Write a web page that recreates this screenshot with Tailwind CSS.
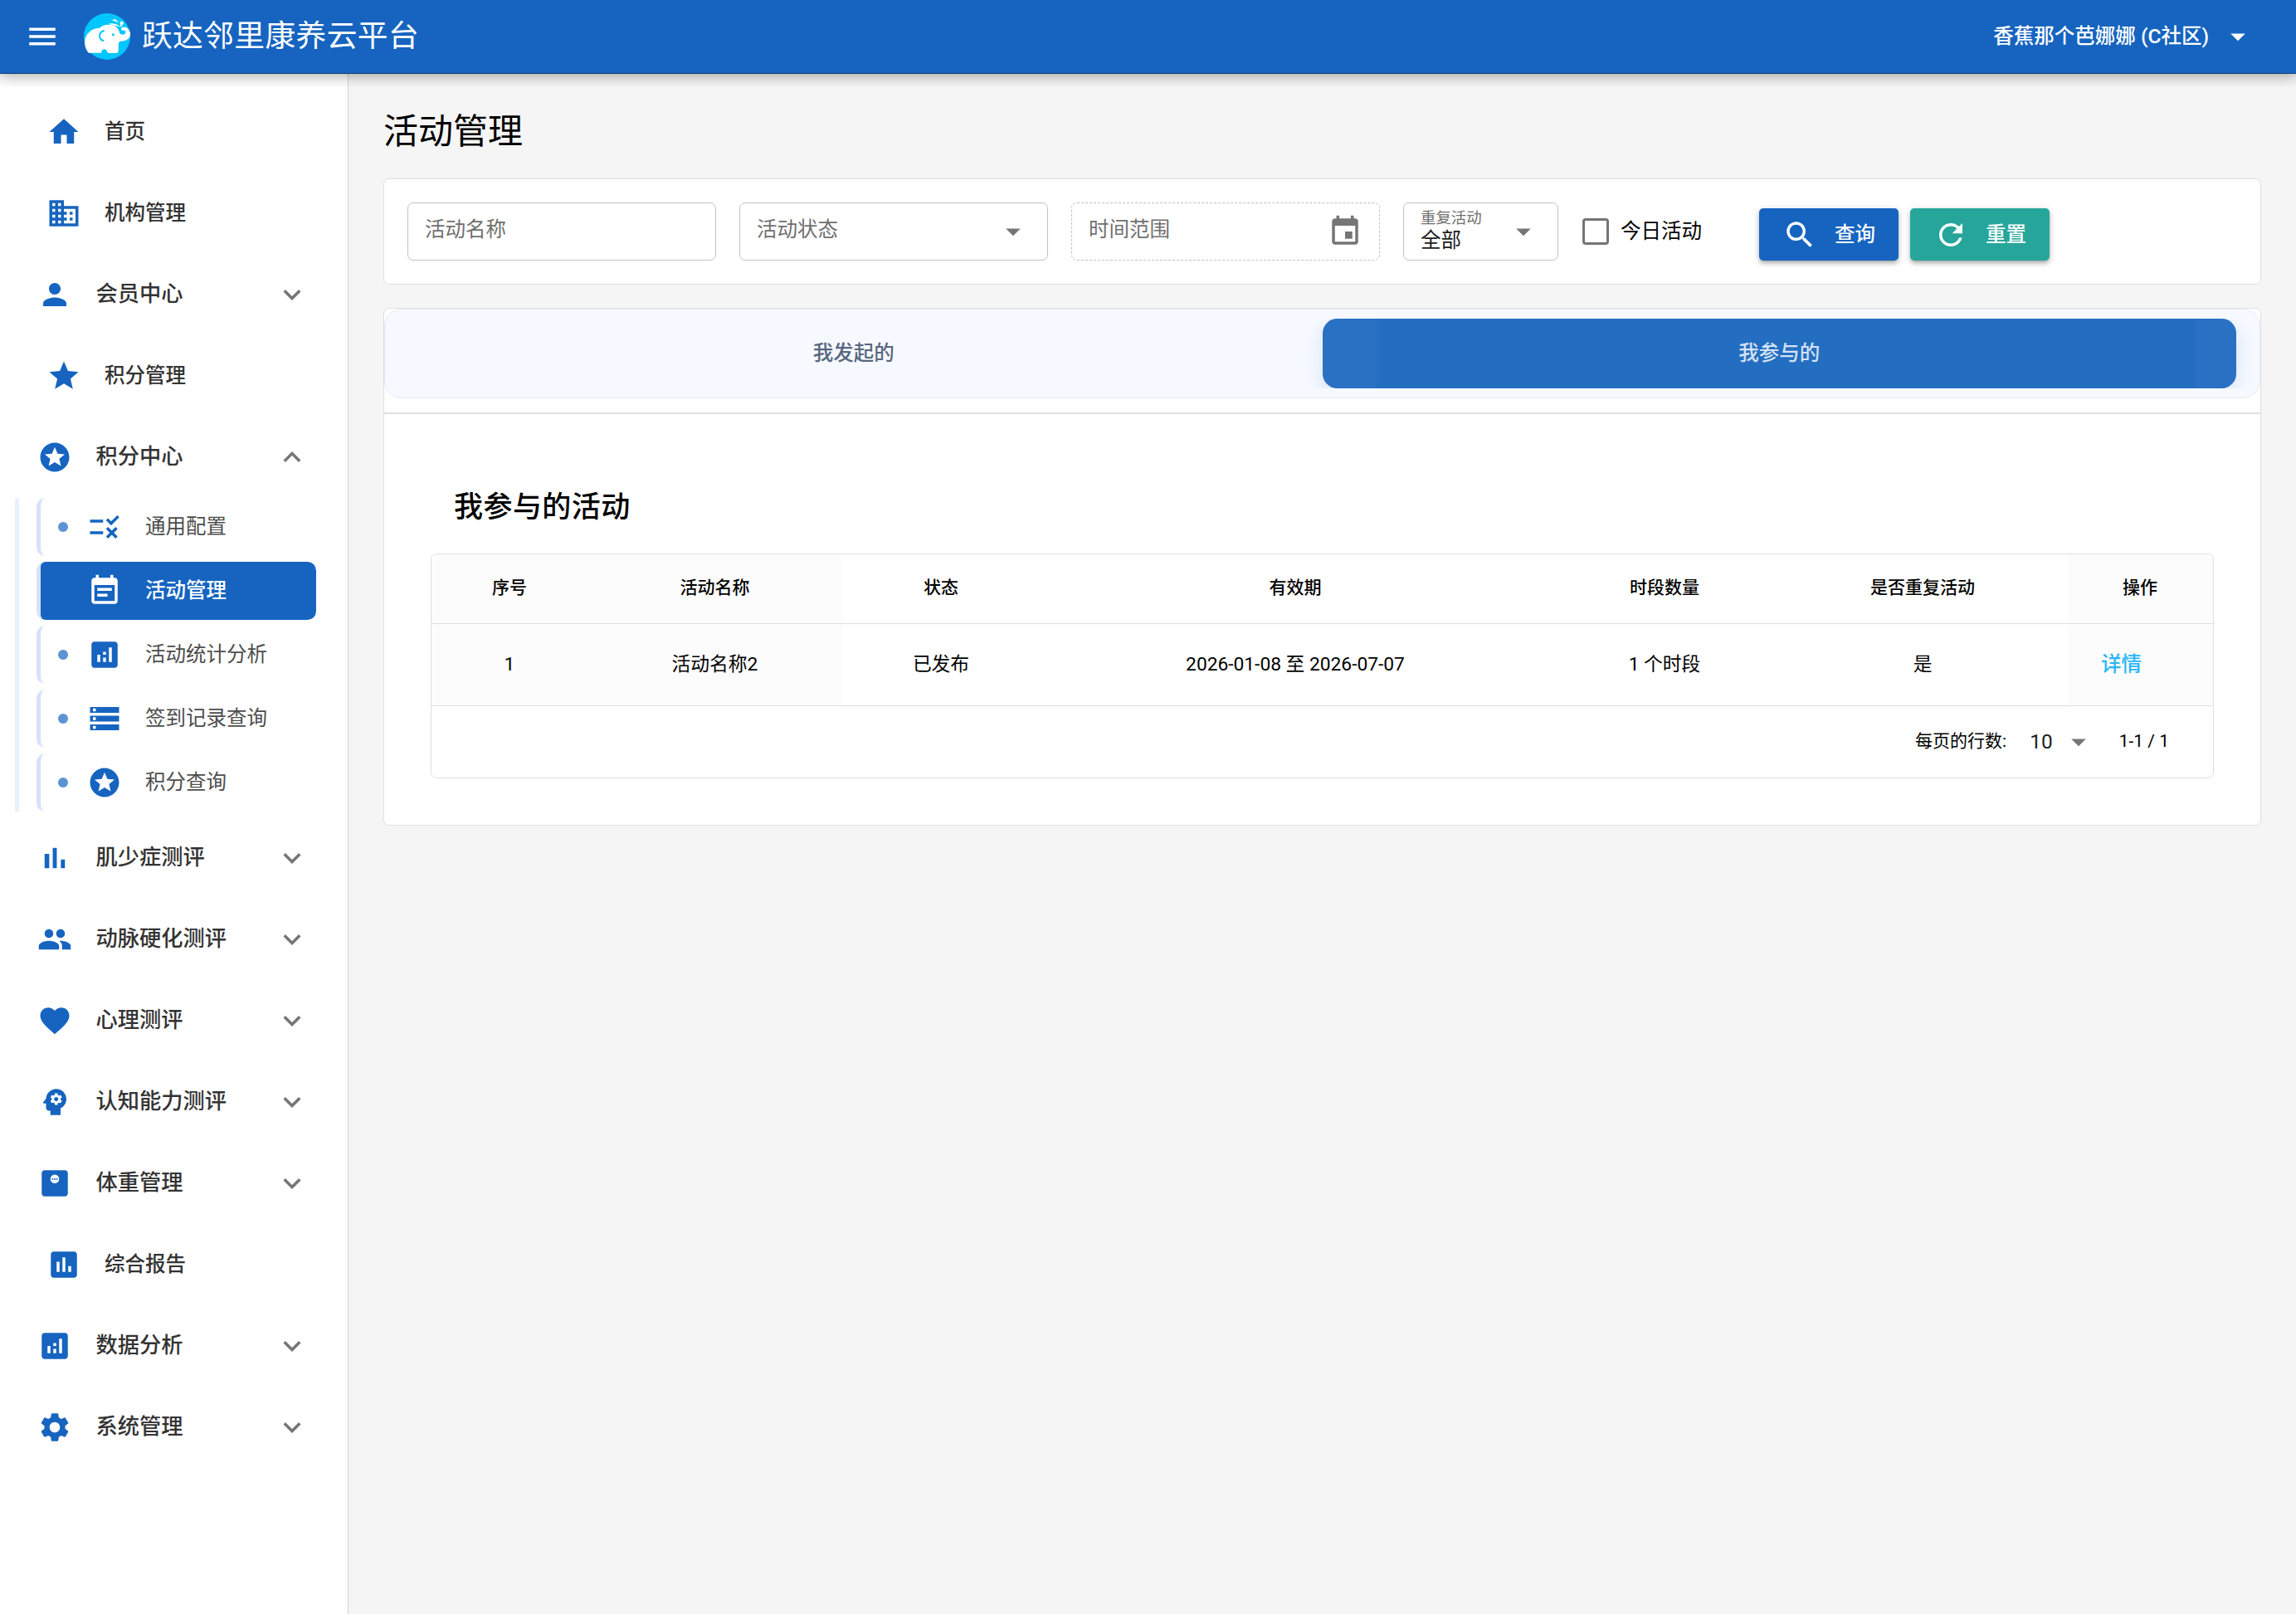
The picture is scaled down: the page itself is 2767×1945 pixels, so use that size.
<!DOCTYPE html>
<html lang="zh-CN">
<head>
  <meta charset="UTF-8">
  <meta name="viewport" content="width=device-width, initial-scale=1.0">
  <title>跃达邻里康养云平台</title>
  <script src="https://cdn.jsdelivr.net/npm/@tailwindcss/browser@4"></script>
</head>
<body class="bg-[#f5f5f5] font-[Roboto,'Noto_Sans_CJK_SC',sans-serif] text-black">

  <!-- 图标 -->
  <svg class="hidden">
    <symbol id="menu" viewBox="0 0 24 24"><path d="M3 18h18v-2H3v2zm0-5h18v-2H3v2zm0-7v2h18V6H3z"/></symbol>
    <symbol id="home" viewBox="0 0 24 24"><path d="M10 20v-6h4v6h5v-8h3L12 3 2 12h3v8z"/></symbol>
    <symbol id="domain" viewBox="0 0 24 24"><path d="M12 7V3H2v18h20V7H12zM6 19H4v-2h2v2zm0-4H4v-2h2v2zm0-4H4V9h2v2zm0-4H4V5h2v2zm4 12H8v-2h2v2zm0-4H8v-2h2v2zm0-4H8V9h2v2zm0-4H8V5h2v2zm10 12h-8v-2h2v-2h-2v-2h2v-2h-2V9h8v10zm-2-8h-2v2h2v-2zm0 4h-2v2h2v-2z"/></symbol>
    <symbol id="person" viewBox="0 0 24 24"><path d="M12 12c2.21 0 4-1.79 4-4s-1.79-4-4-4-4 1.79-4 4 1.79 4 4 4zm0 2c-2.67 0-8 1.34-8 4v2h16v-2c0-2.66-5.33-4-8-4z"/></symbol>
    <symbol id="star" viewBox="0 0 24 24"><path d="M12 17.27L18.18 21l-1.64-7.03L22 9.24l-7.19-.61L12 2 9.19 8.63 2 9.24l5.46 4.73L5.82 21z"/></symbol>
    <symbol id="stars" viewBox="0 0 24 24"><path d="M11.99 2C6.47 2 2 6.48 2 12s4.47 10 9.99 10C17.52 22 22 17.52 22 12S17.52 2 11.99 2zm4.24 16L12 15.45 7.77 18l1.12-4.81-3.73-3.23 4.92-.42L12 5l1.92 4.53 4.92.42-3.73 3.23L16.23 18z"/></symbol>
    <symbol id="rule" viewBox="0 0 24 24"><path d="M16.54 11L13 7.46l1.41-1.41 2.12 2.12 4.24-4.24 1.41 1.41L16.54 11zM11 7H2v2h9V7zm10 6.41L19.59 12 17 14.59 14.41 12 13 13.41 15.59 16 13 18.59 14.41 20 17 17.41 19.59 20 21 18.59 18.41 16 21 13.41zM11 15H2v2h9v-2z"/></symbol>
    <symbol id="event-note" viewBox="0 0 24 24"><path d="M17 10H7v2h10v-2zm2-7h-1V1h-2v2H8V1H6v2H5c-1.11 0-1.99.9-1.99 2L3 19c0 1.1.89 2 2 2h14c1.1 0 2-.9 2-2V5c0-1.1-.9-2-2-2zm0 16H5V8h14v11zm-5-5H7v2h7v-2z"/></symbol>
    <symbol id="event" viewBox="0 0 24 24"><path d="M17 12h-5v5h5v-5zM16 1v2H8V1H6v2H5c-1.11 0-1.99.9-1.99 2L3 19c0 1.1.89 2 2 2h14c1.1 0 2-.9 2-2V5c0-1.1-.9-2-2-2h-1V1h-2zm3 18H5V8h14v11z"/></symbol>
    <symbol id="analytics" viewBox="0 0 24 24"><path d="M19 3H5c-1.1 0-2 .9-2 2v14c0 1.1.9 2 2 2h14c1.1 0 2-.9 2-2V5c0-1.1-.9-2-2-2zM9 17H7v-5h2v5zm4 0h-2v-3h2v3zm0-5h-2v-2h2v2zm4 5h-2V7h2v10z"/></symbol>
    <symbol id="assessment" viewBox="0 0 24 24"><path d="M19 3H5c-1.1 0-2 .9-2 2v14c0 1.1.9 2 2 2h14c1.1 0 2-.9 2-2V5c0-1.1-.9-2-2-2zM9 17H7v-7h2v7zm4 0h-2V7h2v10zm4 0h-2v-4h2v4z"/></symbol>
    <symbol id="storage" viewBox="0 0 24 24"><path d="M2 20h20v-4H2v4zm2-3h2v2H4v-2zM2 4v4h20V4H2zm4 3H4V5h2v2zm-4 7h20v-4H2v4zm2-3h2v2H4v-2z"/></symbol>
    <symbol id="bar-chart" viewBox="0 0 24 24"><path d="M5 9.2h3.2V19H5zM10.6 5h2.8v14h-2.8zm5.6 8H19v6h-2.8z"/></symbol>
    <symbol id="people" viewBox="0 0 24 24"><path d="M16 11c1.66 0 2.99-1.34 2.99-3S17.66 5 16 5c-1.66 0-3 1.34-3 3s1.34 3 3 3zm-8 0c1.66 0 2.99-1.34 2.99-3S9.66 5 8 5C6.34 5 5 6.34 5 8s1.34 3 3 3zm0 2c-2.33 0-7 1.17-7 3.5V19h14v-2.5c0-2.33-4.67-3.5-7-3.5zm8 0c-.29 0-.62.02-.97.05 1.16.84 1.97 1.97 1.97 3.45V19h6v-2.5c0-2.33-4.67-3.5-7-3.5z"/></symbol>
    <symbol id="favorite" viewBox="0 0 24 24"><path d="M12 21.35l-1.45-1.32C5.4 15.36 2 12.28 2 8.5 2 5.42 4.42 3 7.5 3c1.74 0 3.41.81 4.5 2.09C13.09 3.81 14.76 3 16.5 3 19.58 3 22 5.42 22 8.5c0 3.78-3.4 6.86-8.55 11.54L12 21.35z"/></symbol>
    <symbol id="psychology" viewBox="0 0 24 24"><path d="M13 8.57c-.79 0-1.43.64-1.43 1.43s.64 1.43 1.43 1.43 1.43-.64 1.43-1.43-.64-1.43-1.43-1.43z"/><path d="M13 3C9.25 3 6.2 5.94 6.02 9.64L4.1 12.2c-.25.33-.01.8.4.8H6v3c0 1.1.9 2 2 2h1v3h7v-4.68c2.36-1.12 4-3.53 4-6.32 0-3.87-3.13-7-7-7zm3 7c0 .13-.01.26-.02.39l.83.66c.08.06.1.16.05.25l-.8 1.39c-.05.09-.16.12-.24.09l-.99-.4c-.21.16-.43.29-.67.39L14 13.83c-.01.1-.1.17-.2.17h-1.6c-.1 0-.18-.07-.2-.17l-.15-1.06c-.25-.1-.47-.23-.68-.39l-.99.4c-.09.03-.2 0-.25-.09l-.8-1.39c-.05-.08-.03-.19.05-.25l.84-.66c-.01-.13-.02-.26-.02-.39s.02-.27.04-.39l-.85-.66c-.08-.06-.1-.16-.05-.26l.8-1.38c.05-.09.15-.12.24-.09l1 .4c.2-.15.43-.29.67-.39l.15-1.06C12.02 6.07 12.1 6 12.2 6h1.6c.1 0 .18.07.2.17l.15 1.06c.24.1.46.23.67.39l1-.4c.09-.03.2 0 .24.09l.8 1.38c.05.09.03.2-.05.26l-.85.66c.03.12.04.25.04.39z"/></symbol>
    <symbol id="weight" viewBox="0 0 24 24"><path fill-rule="evenodd" d="M19 3H5c-1.1 0-2 .9-2 2v14c0 1.1.9 2 2 2h14c1.1 0 2-.9 2-2V5c0-1.1-.9-2-2-2zm-7 9a3 3 0 1 1 0-6 3 3 0 0 1 0 6z"/><path d="M10 8.5h1v1h-1zM11.5 8.5h1v1h-1zM13 8.5h1v1h-1z"/></symbol>
    <symbol id="settings" viewBox="0 0 24 24"><path d="M19.14 12.94c.04-.3.06-.61.06-.94 0-.32-.02-.64-.07-.94l2.03-1.58c.18-.14.23-.41.12-.61l-1.92-3.32c-.12-.22-.37-.29-.59-.22l-2.39.96c-.5-.38-1.03-.7-1.62-.94l-.36-2.54c-.04-.24-.24-.41-.48-.41h-3.84c-.24 0-.43.17-.47.41l-.36 2.54c-.59.24-1.13.57-1.62.94l-2.39-.96c-.22-.08-.47 0-.59.22L2.74 8.87c-.12.21-.08.47.12.61l2.03 1.58c-.05.3-.09.63-.09.94s.02.64.07.94l-2.03 1.58c-.18.14-.23.41-.12.61l1.92 3.32c.12.22.37.29.59.22l2.39-.96c.5.38 1.03.7 1.62.94l.36 2.54c.05.24.24.41.48.41h3.84c.24 0 .44-.17.47-.41l.36-2.54c.59-.24 1.13-.56 1.62-.94l2.39.96c.22.08.47 0 .59-.22l1.92-3.32c.12-.22.07-.47-.12-.61l-2.01-1.58zM12 15.6c-1.98 0-3.6-1.62-3.6-3.6s1.62-3.6 3.6-3.6 3.6 1.62 3.6 3.6-1.62 3.6-3.6 3.6z"/></symbol>
    <symbol id="search" viewBox="0 0 24 24"><path d="M15.5 14h-.79l-.28-.27C15.41 12.59 16 11.11 16 9.5 16 5.91 13.09 3 9.5 3S3 5.91 3 9.5 5.91 16 9.5 16c1.61 0 3.09-.59 4.23-1.57l.27.28v.79l5 4.99L20.49 19l-4.99-5zm-6 0C7.01 14 5 11.99 5 9.5S7.01 5 9.5 5 14 7.01 14 9.5 11.99 14 9.5 14z"/></symbol>
    <symbol id="refresh" viewBox="0 0 24 24"><path d="M17.65 6.35C16.2 4.9 14.21 4 12 4c-4.42 0-7.99 3.58-7.99 8s3.57 8 7.99 8c3.73 0 6.84-2.55 7.73-6h-2.08c-.82 2.33-3.04 4-5.65 4-3.31 0-6-2.69-6-6s2.69-6 6-6c1.66 0 3.14.69 4.22 1.78L13 11h7V4l-2.35 2.35z"/></symbol>
    <symbol id="down" viewBox="0 0 24 24"><path d="M7.41 8.59L12 13.17l4.59-4.58L18 10l-6 6-6-6z"/></symbol>
    <symbol id="up" viewBox="0 0 24 24"><path d="M7.41 15.41L12 10.83l4.59 4.58L18 14l-6-6-6 6z"/></symbol>
    <symbol id="drop" viewBox="0 0 24 24"><path d="M7 10l5 5 5-5z"/></symbol>
  </svg>

  <div class="flex h-[1945px] w-[2767px] flex-col overflow-hidden">

    <!-- 顶部栏 -->
    <header class="relative z-10 flex h-[89px] shrink-0 items-center border-b border-[#114d96] bg-[#1664c0] text-white">
      <svg class="ml-[30px] size-[42px] fill-current"><use href="#menu"/></svg>
      <svg class="ml-[29px] size-14" viewBox="33 24 168 168">
        <circle cx="117" cy="108" r="84" fill="#00c6ff"/>
        <path fill="#fff" d="M36 128C38 100 58 78 90 77C102 64 128 62 144 70C156 76 160 86 163 96C168 104 184 102 184 92C184 86 178 84 172 86C166 84 167 76 174 75C186 72 198 80 201 96C203 114 188 126 165 125C160 128 158 132 158 138V160C158 165 155 168 150 168H124C119 168 117 165 116 160C114 152 100 152 98 160L96 167H50C42 156 36 144 36 128z"/>
        <path d="M105 88C86 92 86 118 103 123" fill="none" stroke="#00c6ff" stroke-width="6" stroke-linecap="round"/>
        <circle cx="139" cy="101" r="4.5" fill="#00c6ff"/>
        <g fill="#fff">
          <path d="M136 50C142 42 154 46 158 60C152 54 144 51 136 50zM123 62C136 58 154 62 166 73C152 69 138 69 123 62z"/>
          <circle cx="170" cy="60" r="6.5"/>
          <path d="M164 72L168 62L172 72z"/>
        </g>
      </svg>
      <h1 class="ml-[14px] text-[36.75px] leading-none tracking-[.01em]">跃达邻里康养云平台</h1>
      <div class="ml-auto mr-[49px] flex items-center">
        <span class="text-[24.5px] font-medium">香蕉那个芭娜娜 (C社区)</span>
        <svg class="ml-[14px] size-[42px] fill-current"><use href="#drop"/></svg>
      </div>
      <div class="absolute inset-x-0 top-[88px] h-[17px] overflow-hidden">
        <div class="absolute inset-x-0 -top-[88px] h-[88px] shadow-[0_0_17.5px_3.5px_rgba(0,0,0,.2),0_0_17.5px_rgba(0,0,0,.24)]"></div>
      </div>
    </header>

    <div class="flex grow">

      <!-- 侧边菜单 -->
      <aside class="w-[420px] shrink-0 border-r border-[#d2d2d2] bg-white pt-[21px] text-[26.25px] font-medium text-[#333]">
        <a class="flex h-[98px] items-center pl-14 text-[24.5px]">
          <svg class="mr-7 size-[42px] fill-[#1664c0]"><use href="#home"/></svg>首页
        </a>
        <a class="flex h-[98px] items-center pl-14 text-[24.5px]">
          <svg class="mr-7 size-[42px] fill-[#1664c0]"><use href="#domain"/></svg>机构管理
        </a>
        <a class="flex h-[98px] items-center pl-[45px]">
          <svg class="mr-[28.5px] size-[42px] fill-[#1664c0]"><use href="#person"/></svg>会员中心
          <svg class="ml-auto mr-[46px] size-[42px] fill-[#757575]"><use href="#down"/></svg>
        </a>
        <a class="flex h-[98px] items-center pl-14 text-[24.5px]">
          <svg class="mr-7 size-[42px] fill-[#1664c0]"><use href="#star"/></svg>积分管理
        </a>
        <a class="flex h-[98px] items-center pl-[45px]">
          <svg class="mr-[28.5px] size-[42px] fill-[#1664c0]"><use href="#stars"/></svg>积分中心
          <svg class="ml-auto mr-[46px] size-[42px] fill-[#757575]"><use href="#up"/></svg>
        </a>

        <!-- 积分中心子菜单 -->
        <div class="mb-[7px] ml-[18px] mr-[38px] flex flex-col gap-[7px] border-l-5 border-[#e8effd] pl-[21px] text-[24.5px] font-normal text-[#4d4d4d]">
          <a class="flex h-[70px] items-center rounded-[10.5px] border-l-5 border-[#d7e2f8] pl-[21px]">
            <i class="size-3 rounded-full bg-[#5c93d3]"></i>
            <svg class="ml-[23px] mr-7 size-[42px] fill-[#1664c0]"><use href="#rule"/></svg>通用配置
          </a>
          <a class="flex h-[70px] rounded-[10.5px] border-l-5 border-[#d7e2f8] font-medium text-white">
            <span class="flex grow items-center rounded-l-[6px] rounded-r-[10.5px] bg-[#1664c0] pl-14">
              <svg class="mr-7 size-[42px] fill-current"><use href="#event-note"/></svg>活动管理
            </span>
          </a>
          <a class="flex h-[70px] items-center rounded-[10.5px] border-l-5 border-[#d7e2f8] pl-[21px]">
            <i class="size-3 rounded-full bg-[#5c93d3]"></i>
            <svg class="ml-[23px] mr-7 size-[42px] fill-[#1664c0]"><use href="#analytics"/></svg>活动统计分析
          </a>
          <a class="flex h-[70px] items-center rounded-[10.5px] border-l-5 border-[#d7e2f8] pl-[21px]">
            <i class="size-3 rounded-full bg-[#5c93d3]"></i>
            <svg class="ml-[23px] mr-7 size-[42px] fill-[#1664c0]"><use href="#storage"/></svg>签到记录查询
          </a>
          <a class="flex h-[70px] items-center rounded-[10.5px] border-l-5 border-[#d7e2f8] pl-[21px]">
            <i class="size-3 rounded-full bg-[#5c93d3]"></i>
            <svg class="ml-[23px] mr-7 size-[42px] fill-[#1664c0]"><use href="#stars"/></svg>积分查询
          </a>
        </div>

        <a class="flex h-[98px] items-center pl-[45px]">
          <svg class="mr-[28.5px] size-[42px] fill-[#1664c0]"><use href="#bar-chart"/></svg>肌少症测评
          <svg class="ml-auto mr-[46px] size-[42px] fill-[#757575]"><use href="#down"/></svg>
        </a>
        <a class="flex h-[98px] items-center pl-[45px]">
          <svg class="mr-[28.5px] size-[42px] fill-[#1664c0]"><use href="#people"/></svg>动脉硬化测评
          <svg class="ml-auto mr-[46px] size-[42px] fill-[#757575]"><use href="#down"/></svg>
        </a>
        <a class="flex h-[98px] items-center pl-[45px]">
          <svg class="mr-[28.5px] size-[42px] fill-[#1664c0]"><use href="#favorite"/></svg>心理测评
          <svg class="ml-auto mr-[46px] size-[42px] fill-[#757575]"><use href="#down"/></svg>
        </a>
        <a class="flex h-[98px] items-center pl-[45px]">
          <svg class="mr-[28.5px] size-[42px] fill-[#1664c0]"><use href="#psychology"/></svg>认知能力测评
          <svg class="ml-auto mr-[46px] size-[42px] fill-[#757575]"><use href="#down"/></svg>
        </a>
        <a class="flex h-[98px] items-center pl-[45px]">
          <svg class="mr-[28.5px] size-[42px] fill-[#1664c0]"><use href="#weight"/></svg>体重管理
          <svg class="ml-auto mr-[46px] size-[42px] fill-[#757575]"><use href="#down"/></svg>
        </a>
        <a class="flex h-[98px] items-center pl-14 text-[24.5px]">
          <svg class="mr-7 size-[42px] fill-[#1664c0]"><use href="#assessment"/></svg>综合报告
        </a>
        <a class="flex h-[98px] items-center pl-[45px]">
          <svg class="mr-[28.5px] size-[42px] fill-[#1664c0]"><use href="#analytics"/></svg>数据分析
          <svg class="ml-auto mr-[46px] size-[42px] fill-[#757575]"><use href="#down"/></svg>
        </a>
        <a class="flex h-[98px] items-center pl-[45px]">
          <svg class="mr-[28.5px] size-[42px] fill-[#1664c0]"><use href="#settings"/></svg>系统管理
          <svg class="ml-auto mr-[46px] size-[42px] fill-[#757575]"><use href="#down"/></svg>
        </a>
      </aside>

      <main class="grow pl-[42px] pr-[42px] text-[24.5px]">
        <h2 class="flex h-[126px] items-center pt-[14px] text-[42px] leading-none">活动管理</h2>

        <!-- 查询条件 -->
        <section class="flex h-[128px] items-start rounded-[7px] border border-[#dfdfdf] bg-white pl-7 pt-7">
          <div class="flex h-[70px] w-[372px] items-center rounded-[7px] border border-[#c2c2c2] pb-1 pl-5 text-[#6f6f6f]">活动名称</div>
          <div class="ml-7 flex h-[70px] w-[372px] items-center justify-between rounded-[7px] border border-[#c2c2c2] pl-5 pr-5 text-[#6f6f6f]">
            <span class="pb-1">活动状态</span>
            <svg class="size-[42px] fill-[#757575]"><use href="#drop"/></svg>
          </div>
          <div class="ml-7 flex h-[70px] w-[372px] items-center justify-between rounded-[7px] border border-dashed border-[#c2c2c2] pl-5 pr-5 text-[#6f6f6f]">
            <span class="pb-1">时间范围</span>
            <svg class="size-[42px] fill-[#757575]"><use href="#event"/></svg>
          </div>
          <div class="ml-7 flex h-[70px] w-[187px] items-center justify-between rounded-[7px] border border-[#c2c2c2] pl-5 pr-5">
            <div class="flex flex-col pb-[3px]">
              <span class="text-[18.4px] leading-[24px] text-[#6f6f6f]">重复活动</span>
              <span class="leading-[29px] text-[#1d1d1d]">全部</span>
            </div>
            <svg class="size-[42px] fill-[#757575]"><use href="#drop"/></svg>
          </div>
          <label class="ml-[29px] flex h-[70px] items-center">
            <i class="size-[32px] rounded-[4px] border-3 border-[#757575]"></i>
            <span class="ml-[14px]">今日活动</span>
          </label>
          <button class="ml-[69px] mt-[7px] flex h-[63px] w-[168px] items-center rounded-[5px] bg-[#1664c0] pl-7 font-medium text-white shadow-[0_2px_9px_rgba(0,0,0,.2),0_4px_4px_rgba(0,0,0,.14),0_5px_2px_-4px_rgba(0,0,0,.12)]">
            <svg class="mr-[21px] size-[42px] fill-current"><use href="#search"/></svg><span class="pt-[2px]">查询</span>
          </button>
          <button class="ml-[14px] mt-[7px] flex h-[63px] w-[168px] items-center rounded-[5px] bg-[#26a69a] pl-7 font-medium text-white shadow-[0_2px_9px_rgba(0,0,0,.2),0_4px_4px_rgba(0,0,0,.14),0_5px_2px_-4px_rgba(0,0,0,.12)]">
            <svg class="mr-[21px] size-[42px] fill-current"><use href="#refresh"/></svg><span class="pt-[2px]">重置</span>
          </button>
        </section>

        <section class="mt-7 h-[624px] rounded-[7px] border border-[#dfdfdf] bg-white">
          <!-- 标签页 -->
          <div class="h-[108px] rounded-[21px] border border-[#e2eaf7] bg-[#f6f9ff] pb-[11px] pt-[11px]">
            <div class="flex h-[84px] gap-[14px] overflow-hidden pl-[14px] pr-7 font-medium">
              <div class="flex flex-1 items-center justify-center text-[#58677f]">我发起的</div>
              <div class="flex flex-1 items-center justify-center rounded-[17.5px] bg-[linear-gradient(90deg,#2a71c3_65px,#246ec1_65px,#246ec1_1053px,#2a71c3_1053px)] text-[#d3e2f3] shadow-[0_7px_21px_rgba(22,100,192,.15)]">我参与的</div>
            </div>
          </div>
          <div class="mt-[17px] h-[2px] bg-[#dfdfdf]"></div>

          <div class="px-14 pt-[87px]">
            <h3 class="pl-7 text-[35px] font-medium leading-[52px] tracking-[.0125em]">我参与的活动</h3>

            <table class="mt-[29px] w-full table-fixed border-separate border-spacing-0 overflow-hidden rounded-[7px] border border-[#dfdfdf] text-center text-[22.75px]">
              <colgroup>
                <col class="w-[188px]"><col class="w-[307px]"><col class="w-[238px]"><col class="w-[616px]"><col class="w-[274px]"><col class="w-[348px]"><col>
              </colgroup>
              <thead class="text-[21px]">
                <tr class="h-[84px]">
                  <th class="border-b border-[#dfdfdf] bg-[#fcfcfc] pb-[2px] font-medium">序号</th>
                  <th class="border-b border-[#dfdfdf] bg-[#fcfcfc] pb-[2px] font-medium">活动名称</th>
                  <th class="border-b border-[#dfdfdf] pb-[2px] font-medium">状态</th>
                  <th class="border-b border-[#dfdfdf] pb-[2px] font-medium">有效期</th>
                  <th class="border-b border-[#dfdfdf] pb-[2px] font-medium">时段数量</th>
                  <th class="border-b border-[#dfdfdf] pb-[2px] font-medium">是否重复活动</th>
                  <th class="border-b border-[#dfdfdf] bg-[#fcfcfc] pb-[2px] font-medium">操作</th>
                </tr>
              </thead>
              <tbody>
                <tr class="h-[99px]">
                  <td class="border-b border-[#dfdfdf] bg-[#fcfcfc]">1</td>
                  <td class="border-b border-[#dfdfdf] bg-[#fcfcfc]">活动名称2</td>
                  <td class="border-b border-[#dfdfdf]">已发布</td>
                  <td class="border-b border-[#dfdfdf]">2026-01-08 至 2026-07-07</td>
                  <td class="border-b border-[#dfdfdf]">1 个时段</td>
                  <td class="border-b border-[#dfdfdf]">是</td>
                  <td class="border-b border-[#dfdfdf] bg-[#fcfcfc] pl-[41px] text-left text-[24.5px] font-medium text-[#29b6f6]">详情</td>
                </tr>
              </tbody>
              <tfoot>
                <tr class="h-[86px]">
                  <td colspan="7">
                    <div class="flex items-center justify-end pr-[53px] text-[21px]">
                      <span>每页的行数:</span>
                      <span class="ml-[28px] text-[24.5px] text-[#1d1d1d]">10</span>
                      <svg class="ml-[10px] size-[42px] fill-[#757575]"><use href="#drop"/></svg>
                      <span class="ml-7">1-1 / 1</span>
                    </div>
                  </td>
                </tr>
              </tfoot>
            </table>
          </div>
        </section>
      </main>
    </div>
  </div>
</body>
</html>
